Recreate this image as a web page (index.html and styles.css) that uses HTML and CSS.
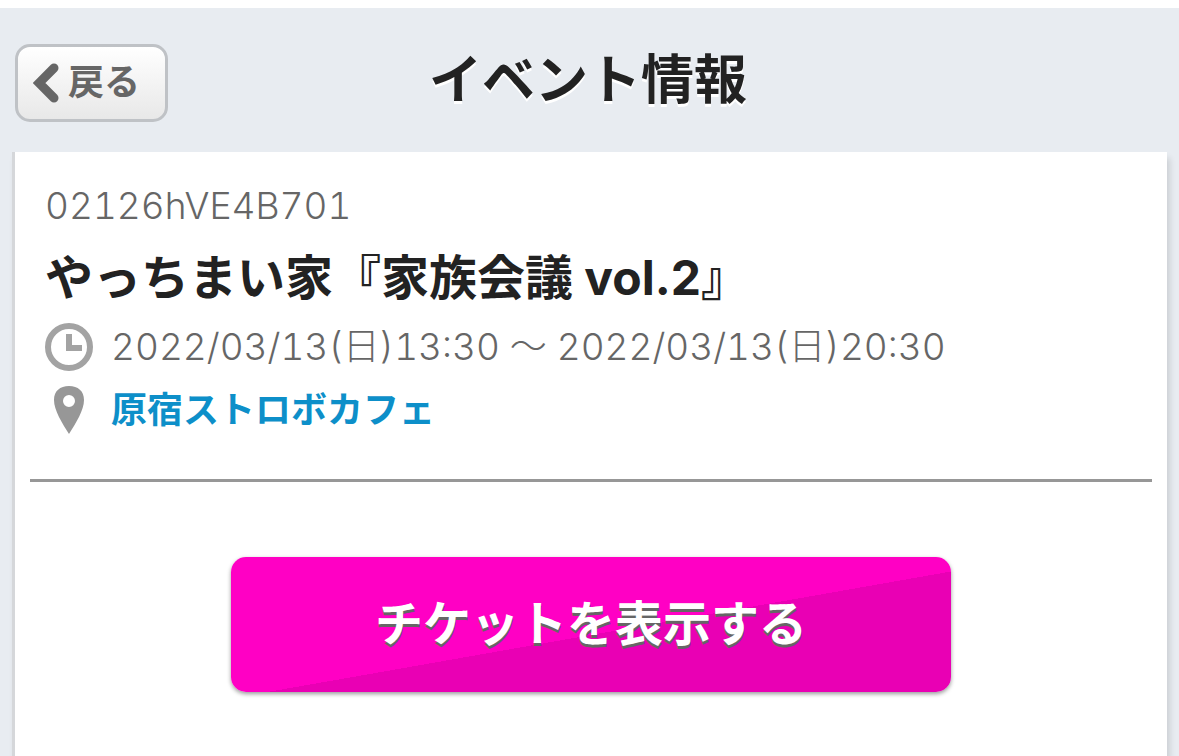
FILE: index.html
```html
<!DOCTYPE html>
<html lang="ja">
<head>
    <meta charset="UTF-8">
    <meta name="viewport" content="width=device-width, initial-scale=1.0">
    <title>イベント情報</title>
    <link rel="stylesheet" href="styles.css">
</head>
<body>
    <header class="header">
        <button type="button" class="back-button">
            <svg class="back-icon" viewBox="0 0 26 40" aria-hidden="true">
                <path d="M21 5 L6 20 L21 35" />
            </svg>
            <span class="back-label">戻る</span>
        </button>
        <h1 class="page-title">イベント情報</h1>
    </header>

    <main class="panel">
        <section class="event">
            <p class="event-code">02126hVE4B701</p>
            <h2 class="event-title">やっちまい家『家族会議 vol.2』</h2>
            <div class="event-row">
                <svg class="event-icon" viewBox="0 0 48 48" aria-hidden="true">
                    <circle cx="24" cy="24" r="21" fill="none" stroke="#a3a3a3" stroke-width="6" />
                    <path d="M24 11 V25 H37" fill="none" stroke="#a3a3a3" stroke-width="6" />
                </svg>
                <span class="event-date">2022/03/13(日)13:30 ～ 2022/03/13(日)20:30</span>
            </div>
            <div class="event-row">
                <svg class="event-icon" viewBox="0 0 48 48" aria-hidden="true">
                    <path fill="#979797" fill-rule="evenodd" d="M24 0 C15 0 9 5 9 14 C9 24 17 37 24 48 C31 37 39 24 39 14 C39 5 33 0 24 0 Z M24 9 A6 6 0 1 1 24 21 A6 6 0 1 1 24 9 Z" />
                </svg>
                <a href="#" class="event-place">原宿ストロボカフェ</a>
            </div>
        </section>

        <button type="button" class="ticket-button">チケットを表示する</button>
    </main>
</body>
</html>
```
FILE: styles.css
```css
html {
    background: #fff;
}

body {
    margin: 8px 0 0;
    min-height: calc(100vh - 8px);
    display: flex;
    flex-direction: column;
    background: #e8ecf1;
    color: #222;
    font-family: Inter, "Noto Sans CJK JP", sans-serif;
}

h1,
h2,
p {
    margin: 0;
}

button {
    font-family: inherit;
    cursor: pointer;
}

/* Header */
.header {
    display: grid;
    grid-template-columns: 1fr auto 1fr;
    align-items: start;
    height: 108px;
    padding: 36px 18px 0 15px;
}

.back-button {
    justify-self: start;
    display: flex;
    align-items: center;
    gap: 9px;
    height: 78px;
    padding: 0 25px 0 15px;
    border: 3px solid #bfc2c6;
    border-radius: 15px;
    background: linear-gradient(#fff, #e8e8e8);
    color: #666;
    font-size: 36px;
    font-weight: 700;
}

.back-icon {
    width: 26px;
    height: 40px;
    fill: none;
    stroke: #666;
    stroke-width: 9;
    stroke-linecap: round;
}

.back-label {
    padding-bottom: 8px;
}

.page-title {
    font-size: 53px;
    line-height: 72px;
    font-weight: 700;
    text-shadow: 0 3px 0 #fff;
}

/* Panel */
.panel {
    flex: 1;
    display: flex;
    flex-direction: column;
    align-items: center;
    margin: 0 12px;
    padding: 0 15px;
    border-left: 3px solid #d5d7da;
    background: #fff;
    box-shadow: 3px 6px 6px rgba(0, 0, 0, 0.12);
}

.event {
    align-self: stretch;
    padding: 24px 15px 38px;
    border-bottom: 3px solid #979797;
}

.event-code,
.event-date {
    color: #666;
    font-size: 37px;
    font-weight: 300;
    font-variant-numeric: tabular-nums;
}

.event-code {
    line-height: 60px;
}

.event-title {
    margin: 6px 0 1px;
    font-size: 48px;
    line-height: 72px;
    font-weight: 700;
}

.event-row {
    display: flex;
    align-items: center;
    gap: 18px;
    height: 63px;
    white-space: nowrap;
}

.event-date,
.event-place {
    padding-bottom: 6px;
}

.event-icon {
    flex: none;
    width: 48px;
    height: 48px;
}

.event-place {
    color: #0d8fc9;
    font-size: 36px;
    font-weight: 700;
    text-decoration: none;
}

.ticket-button {
    width: 720px;
    max-width: 100%;
    height: 135px;
    margin-top: 75px;
    padding-bottom: 10px;
    border: none;
    border-radius: 15px;
    background: linear-gradient(170deg, #ff00c4 54%, #e900b4 54%);
    box-shadow: 0 2px 4px rgba(0, 0, 0, 0.4);
    color: #fff;
    font-size: 48px;
    font-weight: 700;
    text-shadow: 0 3px 0 #666;
}
```
